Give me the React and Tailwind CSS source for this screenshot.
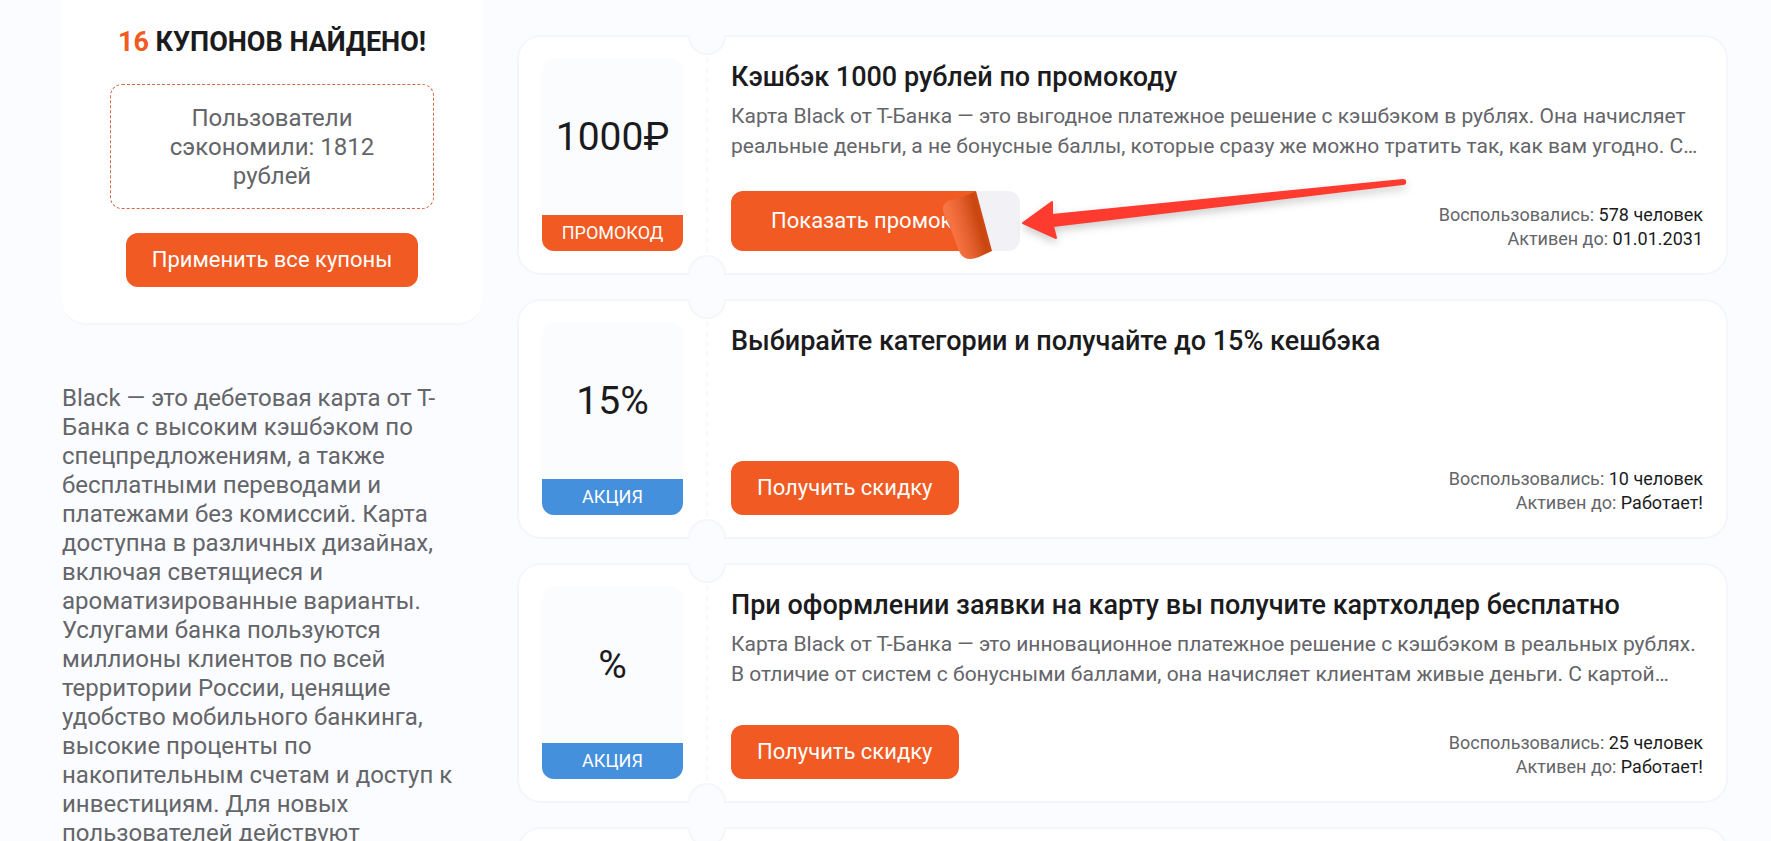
const coupons = [
  {
    value: '1000₽',
    kind: 'promo',
    title: 'Кэшбэк 1000 рублей по промокоду',
    text: 'Карта Black от Т-Банка — это выгодное платежное решение с кэшбэком в рублях. Она начисляет реальные деньги, а не бонусные баллы, которые сразу же можно тратить так, как вам угодно. С…',
    used: '578 человек',
    until: '01.01.2031',
    pointed: true,
  },
  {
    value: '15%',
    kind: 'sale',
    title: 'Выбирайте категории и получайте до 15% кешбэка',
    text: '',
    used: '10 человек',
    until: 'Работает!',
  },
  {
    value: '%',
    kind: 'sale',
    title: 'При оформлении заявки на карту вы получите картхолдер бесплатно',
    text: 'Карта Black от Т-Банка — это инновационное платежное решение с кэшбэком в реальных рублях. В отличие от систем с бонусными баллами, она начисляет клиентам живые деньги. С картой…',
    used: '25 человек',
    until: 'Работает!',
  },
];

function Notches() {
  return (
    <>
      <span className="absolute -top-5 left-[169px] h-[38px] w-[38px] rounded-full border-2 border-[#f4f6fa] bg-[#fbfcff] [clip-path:inset(18px_0_0_0)]" />
      <span className="absolute -bottom-5 left-[169px] h-[38px] w-[38px] rounded-full border-2 border-[#f4f6fa] bg-[#fbfcff] [clip-path:inset(0_0_18px_0)]" />
      <span className="absolute bottom-5 left-[187px] top-5 border-l-2 border-dashed border-[#f8f9fb]" />
    </>
  );
}

function Arrow() {
  return (
    <svg
      className="pointer-events-none absolute left-full top-[-24px] z-10 overflow-visible"
      width="392"
      height="84"
      viewBox="0 0 392 84"
      aria-hidden="true"
    >
      <path
        d="M3 56 L32 35 L32 48 L383 13 C386 13 386 17 383 17 L33 59 L36 71 Z"
        fill="#ff3b30"
        stroke="#ff3b30"
        strokeWidth="2"
        strokeLinejoin="round"
        className="drop-shadow-[0_4px_4px_rgba(0,0,0,0.2)]"
      />
    </svg>
  );
}

function PromoButton({ pointed }) {
  return (
    <div className="relative">
      <button type="button" className="relative block h-[60px] w-[289px] rounded-xl bg-[#f1f1f6] text-left">
        <span className="block h-[60px] w-[240px] overflow-hidden whitespace-nowrap rounded-l-xl bg-[#f15a22] pl-10 text-[22px] leading-[60px] text-white">
          Показать промокод
        </span>
        <svg className="absolute left-[210px] top-0 overflow-visible" width="54" height="70" viewBox="0 0 54 70" aria-hidden="true">
          <defs>
            <linearGradient id="curl" gradientUnits="userSpaceOnUse" x1="6" y1="40" x2="44" y2="30">
              <stop offset="0" stopColor="#f7774a" />
              <stop offset="0.2" stopColor="#f57140" />
              <stop offset="0.5" stopColor="#e4602e" />
              <stop offset="0.85" stopColor="#ca4610" />
              <stop offset="1" stopColor="#d04a14" />
            </linearGradient>
          </defs>
          <path d="M20 0 H35 L20 10 Z" fill="#f15a22" />
          <path
            d="M35 0 L51 60 L38 66 Q23 72 18 60 Q12 42 3 23 Q-1 12 10 9 Q24 6 35 0 Z"
            fill="url(#curl)"
          />
        </svg>
      </button>
      {pointed && <Arrow />}
    </div>
  );
}

function Coupon({ coupon }) {
  const promo = coupon.kind === 'promo';
  return (
    <article className="relative flex h-60 rounded-3xl border-2 border-[#f4f6fa] bg-white px-[23px] py-[22px]">
      <Notches />
      <div className="flex w-[141px] shrink-0 flex-col overflow-hidden rounded-xl bg-[#fbfcfe]">
        <div className="flex flex-1 items-center justify-center text-[39px] text-[#1b1b1d]">{coupon.value}</div>
        <div
          className={
            promo
              ? 'bg-[#f15a22] text-center text-lg leading-9 text-white'
              : 'bg-[#4490dc] text-center text-lg leading-9 text-white'
          }
        >
          {promo ? 'ПРОМОКОД' : 'АКЦИЯ'}
        </div>
      </div>
      <div className="ml-12 flex min-w-0 flex-1 flex-col">
        <h3 className="text-[27px] font-medium leading-9 text-[#1b1b1d]">{coupon.title}</h3>
        <p className="mt-1.5 line-clamp-2 text-[21px] leading-[30px] text-[#646569]">{coupon.text}</p>
        <div className="mt-auto flex items-end justify-between">
          {promo ? (
            <PromoButton pointed={coupon.pointed} />
          ) : (
            <button type="button" className="h-[54px] rounded-xl bg-[#f15a22] px-[26px] pb-0.5 text-[22px] text-white">
              Получить скидку
            </button>
          )}
          <div className="text-right text-lg leading-6 text-[#646569]">
            <p>
              Воспользовались: <span className="text-[#1b1b1d]">{coupon.used}</span>
            </p>
            <p>
              Активен до: <span className="text-[#1b1b1d]">{coupon.until}</span>
            </p>
          </div>
        </div>
      </div>
    </article>
  );
}

export default function App() {
  return (
    <div className="flex h-screen items-start overflow-hidden bg-[#fbfcff] pl-[62px] pr-[43px] font-[Roboto,sans-serif]">
      <aside className="w-[420px] shrink-0">
        <section className="flex flex-col items-center rounded-b-3xl border-b-2 border-[#f4f6fa] bg-white px-12 pb-9 pt-6">
          <h2 className="whitespace-nowrap text-[27px] font-bold leading-9 text-[#1b1b1d]">
            <span className="text-[#f15a22]">16</span> КУПОНОВ НАЙДЕНО!
          </h2>
          <p className="mt-6 w-full rounded-xl border border-dashed border-[#d0684c] px-10 pb-[17px] pt-[19px] text-center text-2xl leading-[29px] text-[#646569]">
            Пользователи сэкономили: 1812 рублей
          </p>
          <button type="button" className="mt-6 h-[54px] whitespace-nowrap rounded-xl bg-[#f15a22] px-[26px] pb-0.5 text-[22px] text-white">
            Применить все купоны
          </button>
        </section>
        <p className="mt-[59px] text-2xl leading-[29px] text-[#646569]">
          Black — это дебетовая карта от Т-Банка с высоким кэшбэком по спецпредложениям, а также бесплатными
          переводами и платежами без комиссий. Карта доступна в различных дизайнах, включая светящиеся и
          ароматизированные варианты. Услугами банка пользуются миллионы клиентов по всей территории России,
          ценящие удобство мобильного банкинга, высокие проценты по накопительным счетам и доступ к инвестициям.
          Для новых пользователей действуют
        </p>
      </aside>
      <main className="ml-[35px] flex min-w-0 flex-1 flex-col gap-6 pt-[35px]">
        {coupons.map((coupon) => (
          <Coupon key={coupon.title} coupon={coupon} />
        ))}
        <article className="relative h-60 shrink-0 rounded-3xl border-2 border-[#f4f6fa] bg-white">
          <Notches />
        </article>
      </main>
    </div>
  );
}
